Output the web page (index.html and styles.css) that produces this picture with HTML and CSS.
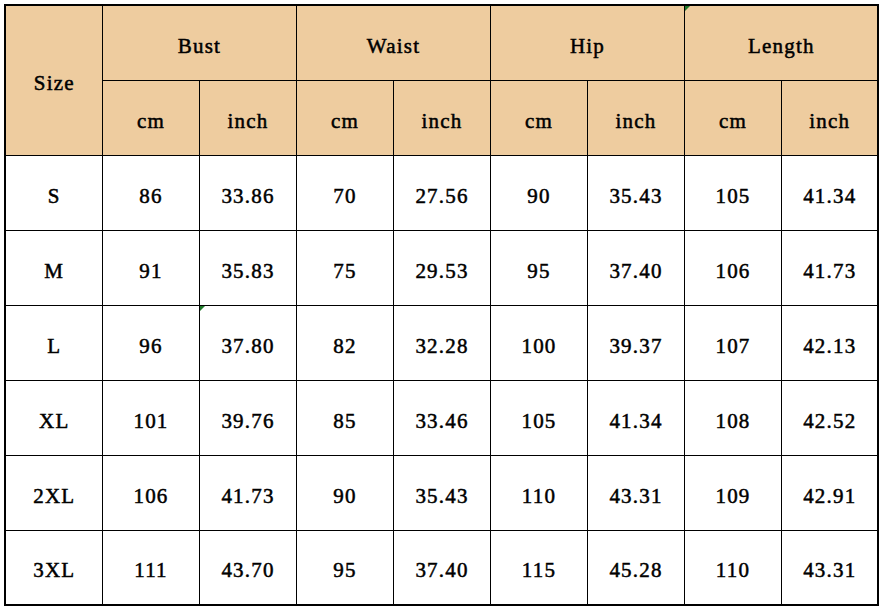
FILE: index.html
```html
<!DOCTYPE html>
<html>
<head>
<meta charset="utf-8">
<link rel="stylesheet" href="styles.css">
</head>
<body>
<table class="chart">
  <colgroup>
    <col class="c-size"><col class="c"><col class="c"><col class="c"><col class="c"><col class="c"><col class="c"><col class="c"><col class="c">
  </colgroup>
  <thead>
    <tr class="h1">
      <th rowspan="2">Size</th>
      <th colspan="2">Bust</th>
      <th colspan="2">Waist</th>
      <th colspan="2">Hip</th>
      <th colspan="2" class="mark-cell"><span class="mark"></span>Length</th>
    </tr>
    <tr class="h2">
      <th>cm</th><th>inch</th><th>cm</th><th>inch</th><th>cm</th><th>inch</th><th>cm</th><th>inch</th>
    </tr>
  </thead>
  <tbody>
    <tr><td>S</td><td>86</td><td>33.86</td><td>70</td><td>27.56</td><td>90</td><td>35.43</td><td>105</td><td>41.34</td></tr>
    <tr><td>M</td><td>91</td><td>35.83</td><td>75</td><td>29.53</td><td>95</td><td>37.40</td><td>106</td><td>41.73</td></tr>
    <tr><td>L</td><td>96</td><td class="mark-cell"><span class="mark"></span>37.80</td><td>82</td><td>32.28</td><td>100</td><td>39.37</td><td>107</td><td>42.13</td></tr>
    <tr><td>XL</td><td>101</td><td>39.76</td><td>85</td><td>33.46</td><td>105</td><td>41.34</td><td>108</td><td>42.52</td></tr>
    <tr><td>2XL</td><td>106</td><td>41.73</td><td>90</td><td>35.43</td><td>110</td><td>43.31</td><td>109</td><td>42.91</td></tr>
    <tr><td>3XL</td><td>111</td><td>43.70</td><td>95</td><td>37.40</td><td>115</td><td>45.28</td><td>110</td><td>43.31</td></tr>
  </tbody>
</table>
</body>
</html>
```
FILE: styles.css
```css
html, body {
  margin: 0;
  padding: 0;
  background: #ffffff;
}
body {
  padding: 4px 0 0 4px;
}
.chart {
  border-collapse: collapse;
  table-layout: fixed;
  width: 874px;
  border: 2px solid #000;
  font-family: "Liberation Serif", "Times New Roman", serif;
  font-weight: normal;
  font-size: 21px;
  letter-spacing: 1.2px;
  -webkit-text-stroke: 0.5px #000;
  color: #000;
}
.c-size { width: 97px; }
.c { width: 97px; }
.chart th, .chart td {
  border: 1px solid #000;
  text-align: center;
  vertical-align: middle;
  padding: 7px 0 0 1px;
  height: 75px;
  box-sizing: border-box;
}
.chart th {
  background: #eecc9f;
  font-weight: normal;
}
.h1 th { height: 75px; }
.mark-cell { position: relative; }
.mark {
  position: absolute;
  left: 0;
  top: 0;
  width: 0;
  height: 0;
  border-top: 5px solid #1f7a2a;
  border-right: 5px solid transparent;
}
```
